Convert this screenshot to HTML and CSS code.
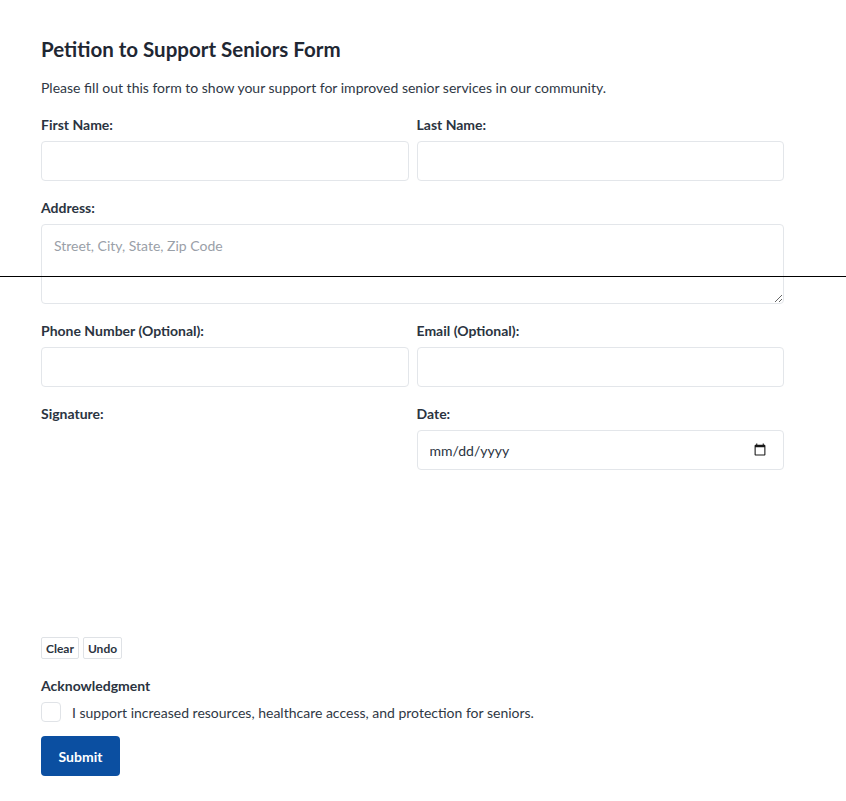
FILE: index.html
```html
<!DOCTYPE html>
<html lang="en">
<head>
<meta charset="utf-8">
<title>Petition to Support Seniors Form</title>
<link rel="stylesheet" href="styles.css">
</head>
<body>
<div class="rule"></div>
<main class="page">
  <h1 class="title">Petition to Support Seniors Form</h1>
  <p class="desc">Please fill out this form to show your support for improved senior services in our community.</p>
  <form class="form">
    <div class="row">
      <div class="field">
        <label class="label" for="fn">First Name:</label>
        <input class="input" id="fn" type="text">
      </div>
      <div class="field">
        <label class="label" for="ln">Last Name:</label>
        <input class="input" id="ln" type="text">
      </div>
    </div>
    <div class="field">
      <label class="label" for="addr">Address:</label>
      <textarea class="input textarea" id="addr" placeholder="Street, City, State, Zip Code"></textarea>
    </div>
    <div class="row">
      <div class="field">
        <label class="label" for="ph">Phone Number (Optional):</label>
        <input class="input" id="ph" type="tel">
      </div>
      <div class="field">
        <label class="label" for="em">Email (Optional):</label>
        <input class="input" id="em" type="email">
      </div>
    </div>
    <div class="row">
      <div class="field sig">
        <label class="label">Signature:</label>
        <div class="canvas"></div>
        <div class="sig-actions">
          <button type="button" class="small-btn">Clear</button>
          <button type="button" class="small-btn">Undo</button>
        </div>
      </div>
      <div class="field">
        <label class="label" for="dt">Date:</label>
        <input class="input date" id="dt" type="date">
      </div>
    </div>
    <div class="ack">
      <div class="label">Acknowledgment</div>
      <label class="check-row">
        <input type="checkbox" class="check">
        <span class="check-text">I support increased resources, healthcare access, and protection for seniors.</span>
      </label>
    </div>
    <button type="submit" class="submit">Submit</button>
  </form>
</main>
</body>
</html>
```
FILE: styles.css
```css
* { box-sizing: border-box; }
html, body { margin: 0; padding: 0; background: #fff; }
body {
  font-family: "Lato", "Noto Sans", sans-serif;
  color: #2b3441;
  position: relative;
  min-height: 801px;
}
.rule {
  position: absolute;
  top: 276px;
  left: 0;
  right: 0;
  height: 1px;
  background: #000;
  z-index: 5;
}
.page {
  width: 743px;
  margin-left: 41px;
  padding-top: 36px;
}
.title {
  font-size: 20.5px;
  font-weight: 700;
  color: #1f2733;
  margin: 0;
  line-height: 26px;
}
.desc {
  font-size: 14px;
  color: #2f3845;
  margin: 17px 0 0;
  line-height: 17px;
}
.form { margin-top: 20px; }
.row {
  display: grid;
  grid-template-columns: 1fr 1fr;
  column-gap: 8px;
}
.field { margin-bottom: 18px; display: flex; flex-direction: column; }
.label {
  display: block;
  font-size: 14px;
  font-weight: 700;
  color: #2b3441;
  line-height: 17px;
  margin-bottom: 8px;
}
.input {
  height: 40px;
  width: 100%;
  border: 1px solid #e3e6ea;
  border-radius: 4px;
  background: #fff;
  font-family: inherit;
  font-size: 14px;
  padding: 0 12px;
  color: #2b3441;
}
.textarea {
  height: 80px;
  padding: 12px;
  resize: vertical;
  line-height: 17px;
}
.textarea::placeholder { color: #9aa0a8; }
.date { color: #2b3441; }
.date::-webkit-datetime-edit-text { padding: 0; }
.date::-webkit-datetime-edit-month-field,
.date::-webkit-datetime-edit-day-field,
.date::-webkit-datetime-edit-year-field { padding: 0; }
.date::-webkit-calendar-picker-indicator { opacity: 0.9; margin-right: 2px; }
.sig { margin-bottom: 0; }
.canvas { height: 200px; }
.sig-actions {
  display: flex;
  gap: 4px;
  margin-top: 7px;
}
.small-btn {
  font-family: inherit;
  font-size: 12px;
  font-weight: 700;
  color: #2b3441;
  background: #fff;
  border: 1px solid #dfe2e6;
  border-radius: 2px;
  height: 22px;
  padding: 0 4px;
}
.ack { margin-top: 18px; }
.check-row {
  display: flex;
  align-items: center;
  gap: 11px;
  margin-top: 1px;
}
.check {
  appearance: none;
  -webkit-appearance: none;
  width: 20px;
  height: 20px;
  margin: 0;
  border: 1px solid #e0e3e7;
  border-radius: 4px;
  background: #fff;
}
.check-text {
  font-size: 14px;
  color: #2f3845;
}
.submit {
  margin-top: 14px;
  height: 40px;
  width: 79px;
  background: #0b4fa1;
  color: #fff;
  border: 0;
  border-radius: 4px;
  font-family: inherit;
  font-size: 14px;
  font-weight: 700;
}
```
